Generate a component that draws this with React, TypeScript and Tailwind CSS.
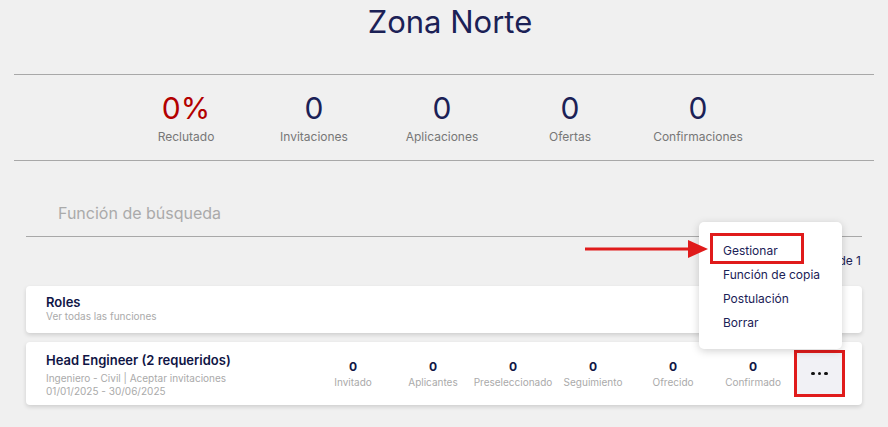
import React from "react";

const stats = [
  { value: "0%", label: "Reclutado", red: true },
  { value: "0", label: "Invitaciones" },
  { value: "0", label: "Aplicaciones" },
  { value: "0", label: "Ofertas" },
  { value: "0", label: "Confirmaciones" },
];

const roleStats = ["Invitado", "Aplicantes", "Preseleccionado", "Seguimiento", "Ofrecido", "Confirmado"];

const menuItems = ["Gestionar", "Función de copia", "Postulación", "Borrar"];

export default function App() {
  return (
    <div
      className="relative min-h-screen bg-[#f0f0f0] px-[14px] text-[#1b2156]"
      style={{ fontFamily: "Inter, 'Noto Sans', sans-serif" }}
    >
      <h1 className="pt-[4px] pl-[12px] text-center text-[31px] leading-[36px] font-normal text-[#1b2156]">Zona Norte</h1>

      <div className="mt-[34px] border-y border-[#a8a8a8] pt-[16px] pb-[15px]">
        <div className="ml-[108px] flex">
          {stats.map((s) => (
            <div key={s.label} className="flex w-[128px] flex-col items-center">
              <span className={`text-[30px] leading-[34px] ${s.red ? "text-[#b30000]" : "text-[#1b2156]"}`}>
                {s.value}
              </span>
              <span className="mt-[4px] text-[12px] leading-[16px] text-[#777]">{s.label}</span>
            </div>
          ))}
        </div>
      </div>

      <div className="mx-[12px] mt-[42px] border-b border-[#a8a8a8] pb-[13px] pl-[32px] text-[16px] leading-[20px] text-[#aaa]">
        Función de búsqueda
      </div>

      <div className="mx-[12px] mt-[16px] flex justify-end pr-[1px] text-[12px] leading-[16px] text-[#1b2156]">
        Página 1 de 1
      </div>

      <div className="mx-[12px] mt-[17px] rounded-[4px] bg-white px-[20px] pt-[8px] pb-[10px] shadow-[0_2px_4px_rgba(0,0,0,0.14)]">
        <div className="text-[13px] leading-[16px] font-semibold text-[#101545]">Roles</div>
        <div className="text-[10px] leading-[13px] text-[#aaa]">Ver todas las funciones</div>
      </div>

      <div className="mx-[12px] mt-[9px] flex h-[63px] items-center rounded-[4px] bg-white pl-[20px] pr-[11px] shadow-[0_2px_4px_rgba(0,0,0,0.14)]">
        <div className="w-[267px] self-start pt-[10px]">
          <div className="text-[13px] leading-[16px] font-semibold text-[#101545]">Head Engineer (2 requeridos)</div>
          <div className="mt-[4px] text-[10px] leading-[13px] text-[#aaa]">Ingeniero - Civil | Aceptar invitaciones</div>
          <div className="text-[10px] leading-[13px] text-[#aaa]">01/01/2025 - 30/06/2025</div>
        </div>
        <div className="flex">
          {roleStats.map((l) => (
            <div key={l} className="flex w-[80px] flex-col items-center">
              <span className="text-[12px] leading-[16px] font-bold text-[#101545]">0</span>
              <span className="mt-[1px] text-[10px] leading-[13px] text-[#aaa]">{l}</span>
            </div>
          ))}
        </div>
        <button className="ml-[1px] flex h-[47px] w-[51px] items-center justify-center border-[3px] border-[#e01b1b] bg-[#f1f1f5]">
          <span className="flex gap-[3px]">
            <span className="h-[3.5px] w-[3.5px] rounded-full bg-[#111]" />
            <span className="h-[3.5px] w-[3.5px] rounded-full bg-[#111]" />
            <span className="h-[3.5px] w-[3.5px] rounded-full bg-[#111]" />
          </span>
        </button>
      </div>

      <div className="absolute top-[222px] left-[699px] w-[143px] rounded-[5px] bg-white pt-[17px] pb-[14px] shadow-[0_2px_8px_rgba(0,0,0,0.18)]">
        {menuItems.map((m, i) => (
          <div key={m} className="relative pl-[24px] text-[12px] leading-[24px] text-[#1b2156]">
            {m}
            {i === 0 && (
              <span className="absolute top-[-6px] left-[11px] h-[31px] w-[94px] border-[3px] border-[#e01b1b]" />
            )}
          </div>
        ))}
      </div>

      <svg className="absolute top-[239px] left-[584px]" width="126" height="20" viewBox="0 0 126 20">
        <line x1="1" y1="10" x2="108" y2="10" stroke="#e01b1b" strokeWidth="3" />
        <polygon points="104,1 124,10 104,19" fill="#e01b1b" />
      </svg>
    </div>
  );
}
